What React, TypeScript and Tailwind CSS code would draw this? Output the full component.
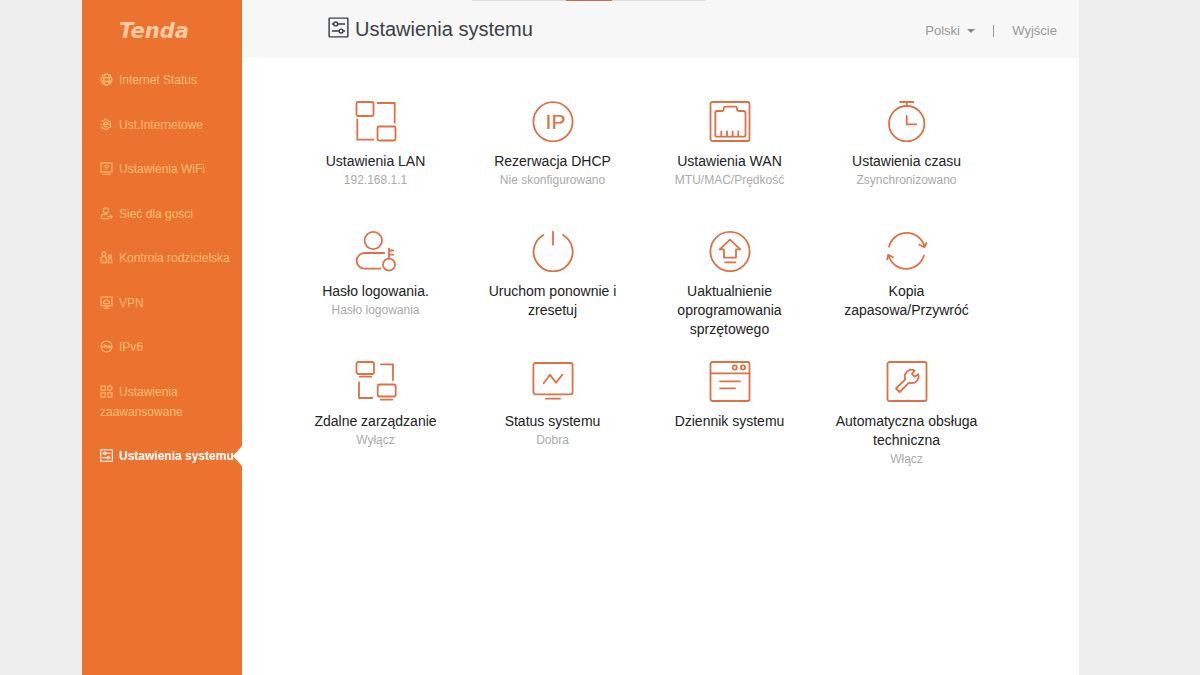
import type { ReactNode } from "react";

interface NavItem {
  label: string;
  icon: ReactNode;
  active?: boolean;
}

interface Tile {
  title: string;
  status?: string;
  icon: ReactNode;
}

const slidersIcon = (
  <>
    <rect x="0.7" y="0.7" width="11.6" height="11.6" rx="0.4" />
    <path d="M2.4 4.3h1.2M6.2 4.3h4.4M2.4 8.7h4.4M9.4 8.7h1.2" />
    <circle cx="4.8" cy="4.3" r="1.2" />
    <circle cx="8.1" cy="8.7" r="1.2" />
  </>
);

const navItems: NavItem[] = [
  {
    label: "Internet Status",
    icon: (
      <>
        <circle cx="6.5" cy="6.5" r="5.5" />
        <ellipse cx="6.5" cy="6.5" rx="2.6" ry="5.5" />
        <path d="M1.5 4.6h10M1.5 8.4h10" />
      </>
    ),
  },
  {
    label: "Ust.Internetowe",
    icon: (
      <>
        <path d="M1 4l4.7-2.8L10.4 4v5l-4.7 2.8L1 9" />
        <path d="M3.4 6.5h4.8a2.3 2.3 0 1 0-.7 1.8M.4 6.5h1.6" />
      </>
    ),
  },
  {
    label: "Ustawienia WiFi",
    icon: (
      <>
        <rect x="1" y="1" width="11" height="9" />
        <path d="M2.4 12.2h8.2M3.8 4.4q2.7-2 5.4 0M5 6.1q1.5-1 3 0M6.5 7.2v.8" />
      </>
    ),
  },
  {
    label: "Sieć dla gości",
    icon: (
      <>
        <circle cx="6" cy="3.5" r="2.6" />
        <path d="M7.5 7.4H3.4a2.2 2.2 0 0 0 0 4.4h5M7.6 9.6h4.4M10.4 7.8l1.8 1.8-1.8 1.8" />
      </>
    ),
  },
  {
    label: "Kontrola rodzicielska",
    icon: (
      <>
        <circle cx="3.8" cy="2.8" r="1.9" />
        <path d="M1 11.8V7.9a2.7 2.7 0 0 1 5.4 0v3.9zM3.7 9.5v2.3" />
        <circle cx="10" cy="5.2" r="1.4" />
        <path d="M8.2 11.8V9.6a1.9 1.9 0 0 1 3.8 0v2.2z" />
      </>
    ),
  },
  {
    label: "VPN",
    icon: (
      <>
        <rect x="1" y="1" width="11" height="8.8" />
        <path d="M3.4 12.2h6.2M6.5 10v2M4.4 7.6a1.2 1.2 0 0 1 .2-2.4 2 2 0 0 1 3.8 0 1.2 1.2 0 0 1 .2 2.4z" />
      </>
    ),
  },
  {
    label: "IPv6",
    icon: (
      <>
        <circle cx="6.5" cy="6.5" r="5.5" />
        <path d="M3 5.2v2.6M4.6 7.8V5.3h1v1.2h-1M6.4 5.6l.8 2 .8-2M9.8 5.2l-.8 1.3v1.2h1.2V6.5H9" />
      </>
    ),
  },
  {
    label: "Ustawienia zaawansowane",
    icon: (
      <>
        <rect x="1" y="1" width="4.2" height="4.2" />
        <circle cx="9.8" cy="3.1" r="2.2" />
        <rect x="1" y="7.8" width="4.2" height="4.2" />
        <rect x="7.8" y="7.8" width="4.2" height="4.2" />
      </>
    ),
  },
  { label: "Ustawienia systemu", icon: slidersIcon, active: true },
];

const tiles: Tile[] = [
  {
    title: "Ustawienia LAN",
    status: "192.168.1.1",
    icon: (
      <>
        <rect x="1.5" y="2" width="17" height="14" rx="1.5" />
        <path d="M22.7 3h17v19.7M2.3 19.3v20.4h16" />
        <rect x="22.5" y="26.5" width="18" height="14" rx="1.5" />
      </>
    ),
  },
  {
    title: "Rezerwacja DHCP",
    status: "Nie skonfigurowano",
    icon: (
      <>
        <circle cx="21" cy="21.7" r="19.6" />
        <text
          x="23.5"
          y="29"
          textAnchor="middle"
          className="fill-[#dc7046] text-[21px]"
          strokeWidth="0.2"
        >
          IP
        </text>
      </>
    ),
  },
  {
    title: "Ustawienia WAN",
    status: "MTU/MAC/Prędkość",
    icon: (
      <>
        <rect x="1.5" y="2" width="39" height="39" rx="2" />
        <path d="M8 11h5.2q1.5 0 1.5-1.5V8.2q0-1.5 1.5-1.5h10.3q1.5 0 1.5 1.5v1.3q0 1.5 1.5 1.5h5.3q1.7 0 1.7 1.7v22.5q0 1.5-1.7 1.5H8q-1.7 0-1.7-1.5V12.7Q6.3 11 8 11z" />
        <path d="M12.3 31.3v5M18 31.3v5M23.7 31.3v5M29.3 31.3v5" />
      </>
    ),
  },
  {
    title: "Ustawienia czasu",
    status: "Zsynchronizowano",
    icon: (
      <>
        <circle cx="20.7" cy="23.7" r="17.7" />
        <path d="M14 2h13.3M20.7 2v4M20.7 16v8.3h9.6" />
      </>
    ),
  },
  {
    title: "Hasło logowania.",
    status: "Hasło logowania",
    icon: (
      <>
        <circle cx="18.3" cy="10.5" r="8.7" />
        <path d="M29.3 23H9.5a7.85 7.85 0 0 0 0 15.7h15.8" />
        <circle cx="34" cy="34.7" r="6" />
        <path d="M34 28.7v-10M34 20.5h4.2M34 24.7h4.2" />
      </>
    ),
  },
  {
    title: "Uruchom ponownie i zresetuj",
    icon: <path d="M11.3 5a19.5 19.5 0 1 0 19.7 0M21 1.7v13" />,
  },
  {
    title: "Uaktualnienie oprogramowania sprzętowego",
    icon: (
      <>
        <circle cx="21" cy="21.5" r="19.6" />
        <path d="M21 9.7L10.7 19.3H15v8.4h12v-8.4h4.3zM16 32.3h10.3" />
      </>
    ),
  },
  {
    title: "Kopia zapasowa/Przywróć",
    icon: (
      <>
        <path d="M3 16.7a18.3 18.3 0 0 1 35.5 0M33.3 14.8l5.2 2.4 2-4.2" />
        <path d="M37.8 25.7a18.3 18.3 0 0 1-35.3-.6M7 27.2l-4.8-2.4-1 4.6" />
      </>
    ),
  },
  {
    title: "Zdalne zarządzanie",
    status: "Wyłącz",
    icon: (
      <>
        <rect x="1.5" y="2" width="17.5" height="12" rx="2" />
        <path d="M4.7 16.7h11.6M26 4.3h12V20M4 22.3V38h13.3" />
        <rect x="22.7" y="24.5" width="18" height="12" rx="2" />
        <path d="M25.7 39.7h11.6" />
      </>
    ),
  },
  {
    title: "Status systemu",
    status: "Dobra",
    icon: (
      <>
        <rect x="1.4" y="3" width="39.2" height="31.3" rx="2" />
        <path d="M11.7 23.3l6.3-8.6 6 8 6.3-8M14 38.7h14" />
      </>
    ),
  },
  {
    title: "Dziennik systemu",
    icon: (
      <>
        <rect x="1.5" y="2" width="39" height="39" rx="2" />
        <path d="M1.5 13.3h39M11 21.3h20M11 28.3h15" />
        <circle cx="25.7" cy="7.5" r="2.1" />
        <circle cx="34" cy="7.5" r="2.1" />
      </>
    ),
  },
  {
    title: "Automatyczna obsługa techniczna",
    status: "Włącz",
    icon: (
      <>
        <rect x="1.5" y="2" width="39" height="39" rx="2" />
        <path d="M10 28.5l9.3-9.2a6.9 6.9 0 0 1 9.4-8.8l-2.8 3.3 2.8 3 3.6-2.6a6.9 6.9 0 0 1-9.2 8.4L13.6 32z" />
      </>
    ),
  },
];

const NavLink: React.FC<NavItem> = ({ label, icon, active }) => (
  <li
    className={
      active ? "relative font-bold text-white" : "text-[#ffbd76]"
    }
  >
    <a href="#" className="block pl-[18px]">
      <svg
        viewBox="0 0 13 13"
        className="mr-1.5 inline-block h-[13px] w-[13px] align-[-2px]"
        fill="none"
        stroke="currentColor"
        strokeWidth="1.1"
      >
        {icon}
      </svg>
      {label}
    </a>
    {active && (
      <span className="absolute top-0 right-0 h-0 w-0 border-y-10 border-r-9 border-y-transparent border-r-white" />
    )}
  </li>
);

const TileLink: React.FC<Tile> = ({ title, status, icon }) => (
  <a href="#" className="flex h-[130px] flex-col items-center px-4 text-center">
    <svg
      viewBox="0 0 42 42"
      className="mb-2.5 h-[42px] w-[42px] shrink-0"
      fill="none"
      stroke="#dc7046"
      strokeWidth="1.8"
      strokeLinecap="round"
      strokeLinejoin="round"
    >
      {icon}
    </svg>
    <span className="text-[14px] leading-[19px] text-[#222]">{title}</span>
    {status && (
      <span className="text-[12px] leading-[19px] text-[#aaa]">{status}</span>
    )}
  </a>
);

const App: React.FC = () => {
  return (
    <div className="min-h-screen bg-[#eee] pr-[121px] pl-[82px] font-['Liberation_Sans',Arial,sans-serif]">
      <div className="flex min-h-screen bg-white">
        <aside className="w-40 shrink-0 bg-[#eb732f]">
          <div className="flex h-[70px] items-center justify-center pr-4 pb-2">
            <span className="font-['DejaVu_Sans',sans-serif] text-[21px] leading-[24px] font-bold text-[#ffcba2] italic">
              Tenda
            </span>
          </div>
          <nav>
            <ul className="flex h-[396px] flex-col justify-between text-[12px] leading-[20px]">
              {navItems.map((item) => (
                <NavLink key={item.label} {...item} />
              ))}
            </ul>
          </nav>
        </aside>

        <main className="min-w-0 flex-1">
          <header className="relative flex h-[58px] items-center justify-between bg-[#f7f7f7] pr-[22px] pl-[86px]">
            <div className="absolute top-0 left-[230px] flex h-px w-[234px] justify-center bg-[#ddd]">
              <span className="h-px w-[46px] bg-[#c0714a]" />
            </div>
            <h1 className="flex items-center text-[20px] leading-[24px] text-[#3a3f47]">
              <svg
                viewBox="0 0 13 13"
                className="mr-1.5 mb-1 h-[21px] w-[21px]"
                fill="none"
                stroke="currentColor"
                strokeWidth="0.9"
              >
                {slidersIcon}
              </svg>
              Ustawienia systemu
            </h1>
            <div className="flex items-center pt-1 text-[13px] leading-[20px] text-[#999]">
              <div className="relative">
                <select
                  aria-label="Język"
                  className="block w-[50px] appearance-none bg-transparent"
                >
                  <option>Polski</option>
                </select>
                <svg
                  viewBox="0 0 8 4"
                  className="pointer-events-none absolute top-2 right-0 h-1 w-2"
                  fill="#888"
                >
                  <path d="M0 0h8L4 4z" />
                </svg>
              </div>
              <span className="mx-[18px] h-3 w-0 border-l border-[#999]" />
              <a href="#">Wyjście</a>
            </div>
          </header>

          <section className="grid grid-cols-4 pt-[42px] pr-[84px] pl-[45px]">
            {tiles.map((tile) => (
              <TileLink key={tile.title} {...tile} />
            ))}
          </section>
        </main>
      </div>
    </div>
  );
};

export default App;
